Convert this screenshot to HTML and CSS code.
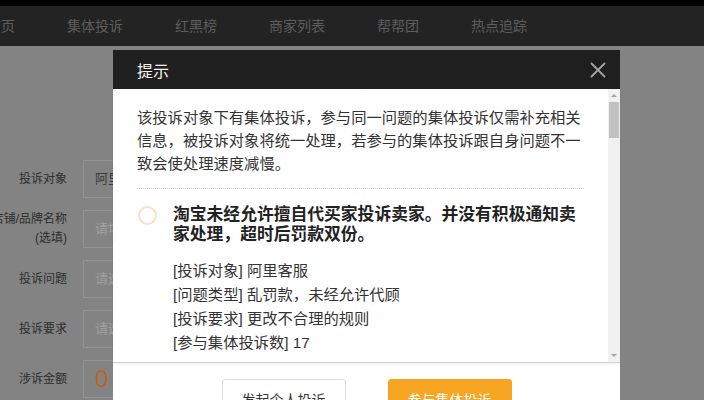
FILE: index.html
```html
<!DOCTYPE html>
<html lang="zh-CN">
<head>
    <meta charset="UTF-8">
    <meta name="viewport" content="width=device-width, initial-scale=1.0">
    <title>集体投诉提示</title>
    <link rel="stylesheet" href="styles.css">
</head>
<body>
    <div class="topline"></div>
    <nav class="nav">
        <a href="#">首页</a>
        <a href="#">集体投诉</a>
        <a href="#">红黑榜</a>
        <a href="#">商家列表</a>
        <a href="#">帮帮团</a>
        <a href="#">热点追踪</a>
    </nav>

    <main class="form">
        <div class="row">
            <div class="label"><span>投诉对象</span></div>
            <div class="field">阿里客服</div>
        </div>
        <div class="row">
            <div class="label"><span>店铺/品牌名称</span><span>(选填)</span></div>
            <div class="field placeholder">请填写店铺或品牌名称</div>
        </div>
        <div class="row">
            <div class="label"><span>投诉问题</span></div>
            <div class="field placeholder">请选择投诉问题</div>
        </div>
        <div class="row">
            <div class="label"><span>投诉要求</span></div>
            <div class="field placeholder">请选择投诉要求</div>
        </div>
        <div class="row">
            <div class="label"><span>涉诉金额</span></div>
            <div class="field amount">0</div>
        </div>
    </main>

    <div class="dialog">
        <div class="dialog-head">
            <span class="dialog-title">提示</span>
            <button class="dialog-close" type="button">
                <svg width="16" height="16" viewBox="0 0 16 16">
                    <path d="M1 1L15 15M15 1L1 15" stroke="#a3a3a3" stroke-width="1.8" fill="none"/>
                </svg>
            </button>
        </div>
        <div class="dialog-body">
            <div class="dialog-scroll">
                <p class="notice">该投诉对象下有集体投诉，参与同一问题的集体投诉仅需补充相关信息，被投诉对象将统一处理，若参与的集体投诉跟自身问题不一致会使处理速度减慢。</p>
                <ul class="group-list">
                    <li class="group-item">
                        <span class="radio"></span>
                        <div class="group-text">
                            <h4 class="group-title">淘宝未经允许擅自代买家投诉卖家。并没有积极通知卖家处理，超时后罚款双份。</h4>
                            <ul class="group-meta">
                                <li>[投诉对象] 阿里客服</li>
                                <li>[问题类型] 乱罚款，未经允许代顾</li>
                                <li>[投诉要求] 更改不合理的规则</li>
                                <li>[参与集体投诉数] 17</li>
                            </ul>
                        </div>
                    </li>
                    <li class="group-item">
                        <span class="radio"></span>
                        <div class="group-text">
                            <h4 class="group-title">阿里客服处理投诉不公，未经核实直接判定卖家违规。</h4>
                            <ul class="group-meta">
                                <li>[投诉对象] 阿里客服</li>
                                <li>[问题类型] 处理不公</li>
                                <li>[投诉要求] 重新核实处理</li>
                                <li>[参与集体投诉数] 9</li>
                            </ul>
                        </div>
                    </li>
                </ul>
            </div>
            <div class="scrollbar">
                <span class="scroll-arrow up"></span>
                <span class="scroll-thumb"></span>
                <span class="scroll-arrow down"></span>
            </div>
        </div>
        <div class="dialog-foot">
            <button class="btn" type="button">发起个人投诉</button>
            <button class="btn btn-primary" type="button">参与集体投诉</button>
        </div>
    </div>
</body>
</html>
```

FILE: styles.css
```css
* {
    box-sizing: border-box;
}
body {
    margin: 0;
    height: 400px;
    overflow: hidden;
    background: #838383;
    font-family: "Liberation Sans", "Noto Sans CJK SC", sans-serif;
}
.topline {
    height: 6px;
    background: #000;
}
.nav {
    display: flex;
    gap: 52px;
    height: 40px;
    background: #232323;
    font-size: 14px;
    line-height: 40px;
}
.nav a {
    color: #5d5d5d;
    text-decoration: none;
    white-space: nowrap;
}
.nav a:first-child {
    margin-left: -13px;
}

/* form behind the mask */
.form {
    display: flex;
    flex-direction: column;
    gap: 12px;
    margin-top: 114px;
}
.row {
    display: flex;
    align-items: center;
    gap: 16px;
    height: 38px;
}
.label {
    display: flex;
    flex-direction: column;
    align-items: flex-end;
    width: 67px;
    flex: none;
    font-size: 12px;
    line-height: 19px;
    color: #2e2e2e;
    white-space: nowrap;
}
.field {
    width: 320px;
    height: 38px;
    padding: 0 11px;
    border: 1px solid #939393;
    font-size: 13px;
    line-height: 36px;
    color: #3c3c3c;
    white-space: nowrap;
    overflow: hidden;
}
.field.placeholder {
    color: #a0a0a0;
}
.field.amount {
    font-size: 24px;
    color: #b9661f;
}

/* dialog */
.dialog {
    position: fixed;
    left: 113px;
    top: 50px;
    width: 507px;
    background: #fff;
}
.dialog-head {
    display: flex;
    align-items: center;
    justify-content: space-between;
    height: 39px;
    padding: 0 14px 0 24px;
    background: #1f1f1f;
}
.dialog-title {
    font-size: 16px;
    color: #f2f2f2;
}
.dialog-close {
    display: flex;
    width: 16px;
    height: 16px;
    padding: 0;
    border: 0;
    background: none;
}
.dialog-body {
    display: flex;
    height: 274px;
    border-bottom: 1px solid #d4d4d4;
    box-shadow: 0 1px 2px rgba(0, 0, 0, 0.08);
}
.dialog-scroll {
    flex: 1;
    overflow: hidden;
    padding: 17px 24px 0;
}
.notice {
    margin: 0;
    padding-bottom: 13px;
    border-bottom: 1px dotted #cfcfcf;
    font-size: 15.3px;
    line-height: 23px;
    color: #333;
}
.group-list {
    margin: 0;
    padding: 0;
    list-style: none;
}
.group-item {
    display: flex;
    gap: 16px;
    padding: 16px 0 14px 1px;
    border-bottom: 1px dotted #cfcfcf;
}
.radio {
    flex: none;
    width: 19px;
    height: 19px;
    margin-top: 1px;
    border: 2px solid #f4e3c4;
    border-radius: 50%;
}
.group-text {
    flex: 1;
}
.group-title {
    margin: 0 0 14px;
    font-size: 16.8px;
    font-weight: bold;
    line-height: 20px;
    color: #222;
}
.group-meta {
    margin: 0;
    padding: 0;
    list-style: none;
    font-size: 15.3px;
    line-height: 24px;
    color: #333;
}
.scrollbar {
    display: flex;
    flex-direction: column;
    align-items: center;
    width: 12px;
    flex: none;
    background: #f1f1f1;
}
.scroll-arrow {
    display: flex;
    align-items: center;
    justify-content: center;
    width: 100%;
    height: 13px;
}
.scroll-arrow::before {
    content: "";
    border-left: 3px solid transparent;
    border-right: 3px solid transparent;
}
.scroll-arrow.up::before {
    border-bottom: 3px solid #a3a3a3;
}
.scroll-arrow.down {
    margin-top: auto;
}
.scroll-arrow.down::before {
    border-top: 3px solid #a3a3a3;
}
.scroll-thumb {
    width: 10px;
    height: 36px;
    background: #c1c1c1;
}
.dialog-foot {
    display: flex;
    justify-content: center;
    gap: 42px;
    padding: 16px 0 20px;
}
.btn {
    width: 124px;
    height: 40px;
    border: 1px solid #dcdcdc;
    border-radius: 3px;
    background: #fff;
    font-family: "Noto Sans CJK SC", sans-serif;
    font-size: 14px;
    color: #333;
}
.btn-primary {
    border-color: #f6a623;
    background: #f6a623;
    color: #fff;
}
```
